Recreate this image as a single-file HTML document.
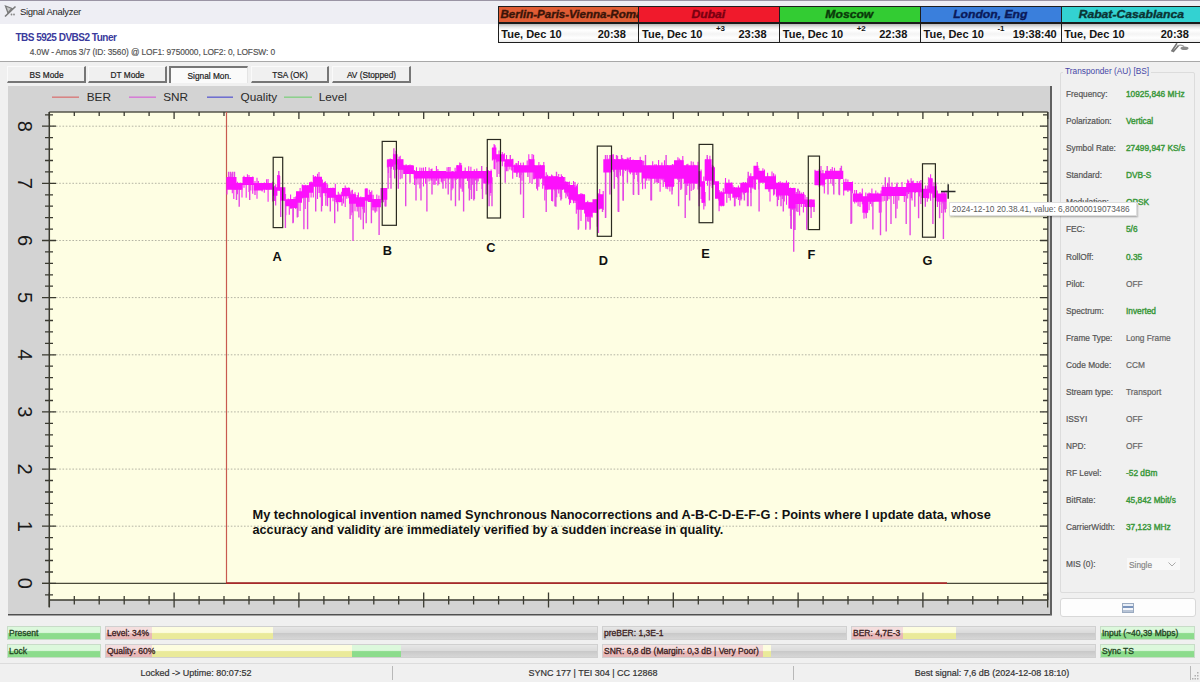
<!DOCTYPE html>
<html><head><meta charset="utf-8"><style>
*{margin:0;padding:0;box-sizing:border-box}
html,body{width:1200px;height:682px;overflow:hidden;background:#f0f0f0;font-family:"Liberation Sans", sans-serif;position:relative}
.a{position:absolute;white-space:nowrap}
.ui{font-size:8.3px;color:#333;-webkit-text-stroke:0.2px}
</style></head><body>

<div class="a" style="left:0;top:0;width:1200px;height:1px;background:#9a94a4"></div>
<div class="a" style="left:0;top:1px;width:1200px;height:23px;background:#eeeef4"></div>
<div class="a" style="left:0;top:24px;width:1200px;height:37px;background:#ffffff"></div>
<div class="a" style="left:0;top:61px;width:1200px;height:1px;background:#a8a8a8"></div>
<svg class="a" style="left:0;top:0" width="20" height="20" viewBox="0 0 20 20">
<path d="M5 16.5 L15.5 6.5" stroke="#7a7a7a" stroke-width="1.6" fill="none"/>
<path d="M5.5 6 L12 8.5 L8 13 Z" stroke="#7a7a7a" stroke-width="1.3" fill="#c8c8c8"/>
<circle cx="11.5" cy="14.5" r="0.9" fill="#888"/><circle cx="14" cy="14.5" r="0.9" fill="#888"/></svg>
<div class="a" style="left:20px;top:5.6px;font-size:9.5px;letter-spacing:-0.3px;color:#1e1e1e">Signal Analyzer</div>
<div class="a" style="left:15.4px;top:31.6px;font-size:10px;letter-spacing:-0.5px;font-weight:bold;color:#3a3a9c">TBS 5925 DVBS2 Tuner</div>
<div class="a" style="left:29.8px;top:46.6px;font-size:8.4px;letter-spacing:-0.1px;color:#505050;-webkit-text-stroke:0.15px">4.0W - Amos 3/7 (ID: 3560) @ LOF1: 9750000, LOF2: 0, LOFSW: 0</div>
<div class="a" style="left:497.7px;top:6px;width:142px;height:16.5px;background:#e05c34;border:1.5px solid #1e1e1e;border-right:none;border-bottom:none"></div>
<div class="a" style="left:497.7px;top:6px;width:141px;height:16.5px;overflow:hidden"><div style="position:absolute;left:0;top:3px;width:141px;text-align:center;font-size:10.3px;font-weight:bold;font-style:italic;color:#3a1408;-webkit-text-stroke:0.35px #3a1408;transform:scaleX(1.12);transform-origin:4px 0;text-align:left;left:3px">Berlin-Paris-Vienna-Roma</div></div>
<div class="a" style="left:497.7px;top:22px;width:142px;height:21px;background:linear-gradient(#b8b8b8 0,#e8e8e8 3px,#ffffff 6px,#f4f4f4 10px,#ffffff 14px,#ececec 18px,#e0e0e0 21px);border:1.5px solid #1e1e1e;border-top:2px solid #1a1a1a;border-right:none"></div>
<div class="a" style="left:501.3px;top:27.5px;font-size:11px;font-weight:bold;color:#141414">Tue, Dec 10</div>
<div class="a" style="left:597.7px;top:27.5px;font-size:11px;font-weight:bold;color:#141414">20:38</div>
<div class="a" style="left:638.45px;top:6px;width:142px;height:16.5px;background:#f01a2c;border:1.5px solid #1e1e1e;border-right:none;border-bottom:none"></div>
<div class="a" style="left:638.45px;top:6px;width:141px;height:16.5px;overflow:hidden"><div style="position:absolute;left:0;top:3px;width:141px;text-align:center;font-size:10.3px;font-weight:bold;font-style:italic;color:#7a0010;-webkit-text-stroke:0.35px #7a0010;transform:scaleX(1.18);transform-origin:71.5px 0;">Dubai</div></div>
<div class="a" style="left:638.45px;top:22px;width:142px;height:21px;background:linear-gradient(#b8b8b8 0,#e8e8e8 3px,#ffffff 6px,#f4f4f4 10px,#ffffff 14px,#ececec 18px,#e0e0e0 21px);border:1.5px solid #1e1e1e;border-top:2px solid #1a1a1a;border-right:none"></div>
<div class="a" style="left:642.0500000000001px;top:27.5px;font-size:11px;font-weight:bold;color:#141414">Tue, Dec 10</div>
<div class="a" style="left:715.95px;top:24px;font-size:8px;font-weight:bold;color:#141414">+3</div>
<div class="a" style="left:738.45px;top:27.5px;font-size:11px;font-weight:bold;color:#141414">23:38</div>
<div class="a" style="left:779.2px;top:6px;width:142px;height:16.5px;background:#33cc33;border:1.5px solid #1e1e1e;border-right:none;border-bottom:none"></div>
<div class="a" style="left:779.2px;top:6px;width:141px;height:16.5px;overflow:hidden"><div style="position:absolute;left:0;top:3px;width:141px;text-align:center;font-size:10.3px;font-weight:bold;font-style:italic;color:#0a3a0a;-webkit-text-stroke:0.35px #0a3a0a;transform:scaleX(1.18);transform-origin:71.5px 0;">Moscow</div></div>
<div class="a" style="left:779.2px;top:22px;width:142px;height:21px;background:linear-gradient(#b8b8b8 0,#e8e8e8 3px,#ffffff 6px,#f4f4f4 10px,#ffffff 14px,#ececec 18px,#e0e0e0 21px);border:1.5px solid #1e1e1e;border-top:2px solid #1a1a1a;border-right:none"></div>
<div class="a" style="left:782.8000000000001px;top:27.5px;font-size:11px;font-weight:bold;color:#141414">Tue, Dec 10</div>
<div class="a" style="left:856.7px;top:24px;font-size:8px;font-weight:bold;color:#141414">+2</div>
<div class="a" style="left:879.2px;top:27.5px;font-size:11px;font-weight:bold;color:#141414">22:38</div>
<div class="a" style="left:919.95px;top:6px;width:142px;height:16.5px;background:#3a7fdc;border:1.5px solid #1e1e1e;border-right:none;border-bottom:none"></div>
<div class="a" style="left:919.95px;top:6px;width:141px;height:16.5px;overflow:hidden"><div style="position:absolute;left:0;top:3px;width:141px;text-align:center;font-size:10.3px;font-weight:bold;font-style:italic;color:#0a1a5a;-webkit-text-stroke:0.35px #0a1a5a;transform:scaleX(1.18);transform-origin:71.5px 0;">London, Eng</div></div>
<div class="a" style="left:919.95px;top:22px;width:142px;height:21px;background:linear-gradient(#b8b8b8 0,#e8e8e8 3px,#ffffff 6px,#f4f4f4 10px,#ffffff 14px,#ececec 18px,#e0e0e0 21px);border:1.5px solid #1e1e1e;border-top:2px solid #1a1a1a;border-right:none"></div>
<div class="a" style="left:923.5500000000001px;top:27.5px;font-size:11px;font-weight:bold;color:#141414">Tue, Dec 10</div>
<div class="a" style="left:997.45px;top:24px;font-size:8px;font-weight:bold;color:#141414">-1</div>
<div class="a" style="left:1012.6500000000001px;top:27.5px;font-size:11px;font-weight:bold;color:#141414">19:38:40</div>
<div class="a" style="left:1060.7px;top:6px;width:142px;height:16.5px;background:#33d2d2;border:1.5px solid #1e1e1e;border-right:none;border-bottom:none"></div>
<div class="a" style="left:1060.7px;top:6px;width:141px;height:16.5px;overflow:hidden"><div style="position:absolute;left:0;top:3px;width:141px;text-align:center;font-size:10.3px;font-weight:bold;font-style:italic;color:#0a3434;-webkit-text-stroke:0.35px #0a3434;transform:scaleX(1.18);transform-origin:71.5px 0;">Rabat-Casablanca</div></div>
<div class="a" style="left:1060.7px;top:22px;width:142px;height:21px;background:linear-gradient(#b8b8b8 0,#e8e8e8 3px,#ffffff 6px,#f4f4f4 10px,#ffffff 14px,#ececec 18px,#e0e0e0 21px);border:1.5px solid #1e1e1e;border-top:2px solid #1a1a1a;border-right:none"></div>
<div class="a" style="left:1064.3px;top:27.5px;font-size:11px;font-weight:bold;color:#141414">Tue, Dec 10</div>
<div class="a" style="left:1160.7px;top:27.5px;font-size:11px;font-weight:bold;color:#141414">20:38</div>
<svg class="a" style="left:1166px;top:42px" width="30" height="14" viewBox="0 0 30 14">
<path d="M5.5 9.5 L11 1.2 M7 10 L12.5 3.5" stroke="#777" stroke-width="1.6" fill="none"/>
<path d="M12 3.5 Q16 2.5 18 4.5" stroke="#999" stroke-width="1.2" fill="none"/>
<ellipse cx="18.5" cy="6.3" rx="4" ry="1.8" fill="#8a8a8a"/></svg>
<div class="a" style="left:7px;top:66px;width:79px;height:17px;background:#f0f0f0;border-bottom:2px solid #767676;border-right:2px solid #767676;border-top:1px solid #fafafa;border-left:1px solid #fafafa"></div>
<div class="a ui" style="left:7px;top:70.3px;width:79px;text-align:center;color:#222">BS Mode</div>
<div class="a" style="left:88px;top:66px;width:79px;height:17px;background:#f0f0f0;border-bottom:2px solid #767676;border-right:2px solid #767676;border-top:1px solid #fafafa;border-left:1px solid #fafafa"></div>
<div class="a ui" style="left:88px;top:70.3px;width:79px;text-align:center;color:#222">DT Mode</div>
<div class="a" style="left:169px;top:66px;width:79px;height:17px;background:#fafafa;border-top:2px solid #767676;border-left:2px solid #767676;border-right:1px solid #e4e4e4"></div>
<div class="a ui" style="left:170px;top:71px;width:79px;text-align:center;color:#222">Signal Mon.</div>
<div class="a" style="left:251px;top:66px;width:78px;height:17px;background:#f0f0f0;border-bottom:2px solid #767676;border-right:2px solid #767676;border-top:1px solid #fafafa;border-left:1px solid #fafafa"></div>
<div class="a ui" style="left:251px;top:70.3px;width:78px;text-align:center;color:#222">TSA (OK)</div>
<div class="a" style="left:332px;top:66px;width:79px;height:17px;background:#f0f0f0;border-bottom:2px solid #767676;border-right:2px solid #767676;border-top:1px solid #fafafa;border-left:1px solid #fafafa"></div>
<div class="a ui" style="left:332px;top:70.3px;width:79px;text-align:center;color:#222">AV (Stopped)</div>
<svg class="a" style="left:0;top:0" width="1200" height="682" viewBox="0 0 1200 682">
<rect x="8" y="86" width="1044" height="529" fill="#d3d3d3"/>
<rect x="8" y="614" width="1044" height="1.5" fill="#505050"/>
<rect x="1050" y="86" width="2" height="529" fill="#606060"/>
<rect x="49.3" y="112" width="998.5" height="488" fill="#fefee3"/>
<line x1="49.3" y1="526.2" x2="1047.8" y2="526.2" stroke="#b4b4a4" stroke-width="1" stroke-dasharray="1.6 1.7"/>
<line x1="49.3" y1="469.1" x2="1047.8" y2="469.1" stroke="#b4b4a4" stroke-width="1" stroke-dasharray="1.6 1.7"/>
<line x1="49.3" y1="411.9" x2="1047.8" y2="411.9" stroke="#b4b4a4" stroke-width="1" stroke-dasharray="1.6 1.7"/>
<line x1="49.3" y1="354.8" x2="1047.8" y2="354.8" stroke="#b4b4a4" stroke-width="1" stroke-dasharray="1.6 1.7"/>
<line x1="49.3" y1="297.6" x2="1047.8" y2="297.6" stroke="#b4b4a4" stroke-width="1" stroke-dasharray="1.6 1.7"/>
<line x1="49.3" y1="240.5" x2="1047.8" y2="240.5" stroke="#b4b4a4" stroke-width="1" stroke-dasharray="1.6 1.7"/>
<line x1="49.3" y1="183.3" x2="1047.8" y2="183.3" stroke="#b4b4a4" stroke-width="1" stroke-dasharray="1.6 1.7"/>
<line x1="49.3" y1="126.2" x2="1047.8" y2="126.2" stroke="#b4b4a4" stroke-width="1" stroke-dasharray="1.6 1.7"/>
<line x1="42" y1="583.4" x2="1047.8" y2="583.4" stroke="#4a4a3a" stroke-width="1.2"/>
<line x1="49.3" y1="112" x2="1047.8" y2="112" stroke="#55554a" stroke-width="1.5"/>
<line x1="1047.8" y1="112" x2="1047.8" y2="600" stroke="#55554a" stroke-width="1.5"/>
<line x1="49.3" y1="600" x2="1047.8" y2="600" stroke="#3a3a30" stroke-width="1.5"/>
<line x1="49.3" y1="112" x2="49.3" y2="607" stroke="#3a3a30" stroke-width="1.5"/>
<path d="M45 594.8H53 M1043 594.8H1047.8 M42 583.4H56 M1040 583.4H1047.8 M45 572.0H53 M1043 572.0H1047.8 M45 560.5H53 M1043 560.5H1047.8 M45 549.1H53 M1043 549.1H1047.8 M45 537.7H53 M1043 537.7H1047.8 M42 526.2H56 M1040 526.2H1047.8 M45 514.8H53 M1043 514.8H1047.8 M45 503.4H53 M1043 503.4H1047.8 M45 492.0H53 M1043 492.0H1047.8 M45 480.5H53 M1043 480.5H1047.8 M42 469.1H56 M1040 469.1H1047.8 M45 457.7H53 M1043 457.7H1047.8 M45 446.2H53 M1043 446.2H1047.8 M45 434.8H53 M1043 434.8H1047.8 M45 423.4H53 M1043 423.4H1047.8 M42 411.9H56 M1040 411.9H1047.8 M45 400.5H53 M1043 400.5H1047.8 M45 389.1H53 M1043 389.1H1047.8 M45 377.7H53 M1043 377.7H1047.8 M45 366.2H53 M1043 366.2H1047.8 M42 354.8H56 M1040 354.8H1047.8 M45 343.4H53 M1043 343.4H1047.8 M45 331.9H53 M1043 331.9H1047.8 M45 320.5H53 M1043 320.5H1047.8 M45 309.1H53 M1043 309.1H1047.8 M42 297.6H56 M1040 297.6H1047.8 M45 286.2H53 M1043 286.2H1047.8 M45 274.8H53 M1043 274.8H1047.8 M45 263.4H53 M1043 263.4H1047.8 M45 251.9H53 M1043 251.9H1047.8 M42 240.5H56 M1040 240.5H1047.8 M45 229.1H53 M1043 229.1H1047.8 M45 217.6H53 M1043 217.6H1047.8 M45 206.2H53 M1043 206.2H1047.8 M45 194.8H53 M1043 194.8H1047.8 M42 183.3H56 M1040 183.3H1047.8 M45 171.9H53 M1043 171.9H1047.8 M45 160.5H53 M1043 160.5H1047.8 M45 149.1H53 M1043 149.1H1047.8 M45 137.6H53 M1043 137.6H1047.8 M42 126.2H56 M1040 126.2H1047.8 M45 114.8H53 M1043 114.8H1047.8 M49.3 112V119 M49.3 592.5V607.5 M74.3 112V116 M74.3 596V604.5 M99.2 112V116 M99.2 596V604.5 M124.2 112V116 M124.2 596V604.5 M149.1 112V116 M149.1 596V604.5 M174.1 112V119 M174.1 592.5V607.5 M199.1 112V116 M199.1 596V604.5 M224.0 112V116 M224.0 596V604.5 M249.0 112V116 M249.0 596V604.5 M273.9 112V116 M273.9 596V604.5 M298.9 112V119 M298.9 592.5V607.5 M323.9 112V116 M323.9 596V604.5 M348.8 112V116 M348.8 596V604.5 M373.8 112V116 M373.8 596V604.5 M398.7 112V116 M398.7 596V604.5 M423.7 112V119 M423.7 592.5V607.5 M448.7 112V116 M448.7 596V604.5 M473.6 112V116 M473.6 596V604.5 M498.6 112V116 M498.6 596V604.5 M523.5 112V116 M523.5 596V604.5 M548.5 112V119 M548.5 592.5V607.5 M573.5 112V116 M573.5 596V604.5 M598.4 112V116 M598.4 596V604.5 M623.4 112V116 M623.4 596V604.5 M648.3 112V116 M648.3 596V604.5 M673.3 112V119 M673.3 592.5V607.5 M698.3 112V116 M698.3 596V604.5 M723.2 112V116 M723.2 596V604.5 M748.2 112V116 M748.2 596V604.5 M773.1 112V116 M773.1 596V604.5 M798.1 112V119 M798.1 592.5V607.5 M823.1 112V116 M823.1 596V604.5 M848.0 112V116 M848.0 596V604.5 M873.0 112V116 M873.0 596V604.5 M897.9 112V116 M897.9 596V604.5 M922.9 112V119 M922.9 592.5V607.5 M947.9 112V116 M947.9 596V604.5 M972.8 112V116 M972.8 596V604.5 M997.8 112V116 M997.8 596V604.5 M1022.7 112V116 M1022.7 596V604.5 M1047.7 112V119 M1047.7 592.5V607.5" stroke="#3a3a30" stroke-width="1.3" fill="none"/>
<text x="0" y="0" transform="translate(25 583.4) rotate(90)" text-anchor="middle" dominant-baseline="central" font-family="Liberation Sans" font-size="20" fill="#1a1a1a">0</text>
<text x="0" y="0" transform="translate(25 526.2) rotate(90)" text-anchor="middle" dominant-baseline="central" font-family="Liberation Sans" font-size="20" fill="#1a1a1a">1</text>
<text x="0" y="0" transform="translate(25 469.1) rotate(90)" text-anchor="middle" dominant-baseline="central" font-family="Liberation Sans" font-size="20" fill="#1a1a1a">2</text>
<text x="0" y="0" transform="translate(25 411.9) rotate(90)" text-anchor="middle" dominant-baseline="central" font-family="Liberation Sans" font-size="20" fill="#1a1a1a">3</text>
<text x="0" y="0" transform="translate(25 354.8) rotate(90)" text-anchor="middle" dominant-baseline="central" font-family="Liberation Sans" font-size="20" fill="#1a1a1a">4</text>
<text x="0" y="0" transform="translate(25 297.6) rotate(90)" text-anchor="middle" dominant-baseline="central" font-family="Liberation Sans" font-size="20" fill="#1a1a1a">5</text>
<text x="0" y="0" transform="translate(25 240.5) rotate(90)" text-anchor="middle" dominant-baseline="central" font-family="Liberation Sans" font-size="20" fill="#1a1a1a">6</text>
<text x="0" y="0" transform="translate(25 183.3) rotate(90)" text-anchor="middle" dominant-baseline="central" font-family="Liberation Sans" font-size="20" fill="#1a1a1a">7</text>
<text x="0" y="0" transform="translate(25 126.2) rotate(90)" text-anchor="middle" dominant-baseline="central" font-family="Liberation Sans" font-size="20" fill="#1a1a1a">8</text>
<line x1="52" y1="97.2" x2="79" y2="97.2" stroke="#d88080" stroke-width="1.5"/>
<line x1="129" y1="97.2" x2="156" y2="97.2" stroke="#d67ad6" stroke-width="1.5"/>
<line x1="207" y1="97.2" x2="233" y2="97.2" stroke="#6a6ad0" stroke-width="1.5"/>
<line x1="284" y1="97.2" x2="312" y2="97.2" stroke="#8ad08a" stroke-width="1.5"/>
<text x="86.7" y="100.8" font-family="Liberation Sans" font-size="11.8" fill="#2a2a2a">BER</text>
<text x="163.2" y="100.8" font-family="Liberation Sans" font-size="11.8" fill="#2a2a2a">SNR</text>
<text x="240.5" y="100.8" font-family="Liberation Sans" font-size="11.8" fill="#2a2a2a">Quality</text>
<text x="318.7" y="100.8" font-family="Liberation Sans" font-size="11.8" fill="#2a2a2a">Level</text>
<line x1="226.5" y1="112" x2="226.5" y2="583.4" stroke="#c85a50" stroke-width="1.2"/>
<line x1="226" y1="583.2" x2="947" y2="583.2" stroke="#a82a2a" stroke-width="1.8"/>
<path d="M227.0 177.6V194.4 M228.1 176.9V189.0 M229.8 176.6V189.0 M230.9 173.6V189.1 M232.3 172.3V193.2 M233.8 177.7V199.0 M235.2 177.6V190.1 M237.4 181.7V194.2 M238.9 183.7V189.0 M240.2 182.6V190.1 M242.0 183.2V197.4 M244.0 175.7V187.7 M246.2 177.2V197.7 M247.4 174.3V184.5 M249.0 175.0V192.1 M250.8 177.1V190.6 M252.7 176.5V193.8 M255.0 181.1V189.6 M257.0 177.8V198.7 M258.4 181.0V189.6 M260.0 183.6V189.6 M262.1 183.3V191.4 M264.3 182.5V192.7 M266.6 179.2V189.8 M268.1 179.0V201.7 M269.3 183.4V189.6 M271.0 183.3V189.0 M272.6 181.8V201.6 M274.6 185.7V200.9 M275.7 184.3V205.4 M277.8 175.0V190.1 M279.7 176.0V190.4 M280.9 188.0V200.0 M282.1 187.2V200.0 M284.3 187.9V200.7 M285.8 199.9V215.2 M288.2 198.6V205.5 M289.3 199.6V214.7 M290.6 194.6V208.8 M291.8 200.0V208.8 M294.1 197.1V206.1 M295.7 196.4V208.9 M297.7 191.7V210.8 M300.1 188.1V211.0 M302.2 184.4V198.4 M303.2 185.5V197.7 M305.2 184.8V209.1 M307.6 185.2V197.5 M308.9 185.7V202.0 M311.1 181.6V197.5 M313.3 174.9V197.4 M315.3 176.1V186.3 M317.5 173.7V199.1 M319.0 172.1V192.9 M320.2 177.4V197.2 M322.4 179.6V205.9 M324.3 181.9V192.7 M325.3 181.2V195.9 M327.6 184.3V206.2 M328.9 188.4V197.6 M330.7 187.8V197.2 M333.0 187.6V201.3 M335.3 183.8V200.1 M337.0 195.5V203.6 M338.3 191.7V201.6 M339.9 193.6V202.5 M341.7 191.8V201.4 M343.5 188.4V203.4 M345.2 185.4V206.9 M346.8 187.4V198.7 M348.8 187.2V198.3 M351.1 190.4V215.3 M352.4 189.7V212.5 M353.6 193.8V203.0 M355.0 192.3V211.2 M357.2 194.9V211.6 M358.4 192.4V206.5 M360.8 196.6V219.7 M362.9 196.9V209.3 M364.4 197.4V212.8 M365.4 188.4V200.0 M366.9 188.0V200.0 M369.3 189.8V201.4 M370.6 191.9V202.1 M371.8 190.5V210.3 M373.2 194.8V210.6 M375.2 199.9V212.7 M376.8 194.6V211.6 M378.9 195.5V206.5 M381.1 188.0V202.7 M383.4 188.6V202.3 M384.7 188.5V198.9 M386.0 188.1V206.5 M387.4 159.8V167.4 M388.4 160.0V173.1 M390.2 158.6V178.1 M391.4 158.9V169.0 M393.5 153.5V169.8 M395.9 150.8V170.2 M397.8 159.3V168.9 M399.0 156.7V169.6 M400.2 155.8V179.2 M402.1 159.6V169.8 M403.8 164.8V174.0 M406.1 164.2V173.9 M408.5 165.2V173.3 M410.0 164.5V173.7 M411.7 165.6V173.4 M413.3 166.0V174.3 M414.6 170.1V185.1 M416.5 167.2V179.5 M418.0 171.7V184.6 M419.9 167.6V188.6 M421.8 167.8V177.9 M423.5 167.6V186.4 M425.6 167.0V183.7 M427.6 171.8V177.9 M429.1 167.6V181.6 M431.0 169.0V180.6 M432.0 168.4V180.8 M433.8 171.8V184.8 M435.1 171.4V184.7 M436.4 166.1V180.7 M437.9 169.0V185.5 M439.8 171.8V177.9 M441.2 171.2V181.7 M442.2 171.4V183.5 M444.1 171.3V181.0 M445.8 171.7V188.6 M447.1 167.2V177.7 M448.7 166.9V180.1 M450.1 167.1V178.2 M451.9 170.9V190.3 M453.1 170.9V188.5 M455.1 167.7V180.6 M456.1 171.0V180.1 M457.5 165.3V178.8 M459.7 162.6V187.2 M460.9 162.9V188.8 M462.3 170.9V191.7 M464.1 170.7V178.5 M465.2 167.6V178.6 M467.5 171.4V180.9 M468.7 166.3V188.4 M470.9 166.8V189.9 M472.7 171.8V184.8 M474.3 169.3V178.6 M475.4 171.7V180.4 M476.8 168.5V191.0 M478.2 171.3V181.6 M479.7 171.6V178.1 M482.0 171.5V189.0 M484.4 171.7V183.2 M485.5 171.8V183.4 M486.9 167.1V190.2 M488.5 170.2V184.4 M490.0 171.3V195.8 M491.1 169.4V192.9 M492.4 147.9V160.5 M494.1 144.0V169.0 M495.1 145.3V169.6 M496.7 155.0V162.6 M499.0 150.6V174.0 M500.4 154.9V164.2 M502.3 151.9V166.2 M504.4 153.2V160.8 M506.5 154.9V171.3 M507.9 159.6V171.2 M509.9 160.0V169.4 M511.7 159.7V170.6 M512.7 158.7V178.8 M514.7 164.6V172.4 M516.0 163.0V172.8 M517.0 163.3V173.9 M518.4 160.9V172.3 M519.4 164.9V177.8 M520.7 162.7V174.9 M522.0 165.4V180.8 M523.3 162.5V172.8 M525.7 165.8V172.3 M527.2 160.6V172.0 M528.8 154.3V172.0 M529.9 159.1V182.9 M532.1 154.0V183.8 M533.6 154.7V179.2 M534.6 165.1V179.3 M536.1 166.0V178.5 M537.6 165.9V190.6 M538.9 162.0V186.8 M540.5 164.7V179.3 M542.7 165.2V188.7 M543.8 162.0V185.5 M544.8 177.0V200.4 M546.2 172.2V190.0 M547.6 174.7V189.4 M549.6 176.5V188.7 M551.6 174.6V201.0 M552.7 175.6V201.4 M555.0 176.6V190.9 M556.7 176.8V197.3 M558.7 174.1V193.4 M560.2 176.9V196.9 M561.3 174.3V189.3 M562.4 175.9V189.9 M564.8 176.9V192.4 M565.9 181.3V198.2 M567.5 181.8V196.5 M569.5 181.4V204.7 M570.6 185.2V203.0 M572.2 185.5V199.6 M573.5 181.0V203.2 M575.0 182.1V203.1 M576.3 185.4V213.7 M577.4 184.0V209.6 M579.7 194.5V209.1 M581.0 193.0V220.9 M582.5 193.8V209.7 M584.6 194.9V213.5 M586.4 202.2V216.2 M587.7 200.8V221.5 M589.0 202.4V222.0 M590.3 202.8V224.5 M592.0 202.9V217.8 M593.8 200.0V212.3 M595.8 199.5V213.0 M598.1 193.1V209.5 M599.7 189.0V209.5 M601.0 194.8V208.0 M603.2 191.0V209.9 M605.5 159.8V171.8 M607.2 155.0V171.9 M609.1 158.5V172.0 M610.5 154.9V171.9 M612.2 154.4V169.3 M613.4 154.3V171.7 M614.5 159.1V180.1 M616.3 159.8V177.1 M617.6 155.7V178.2 M618.9 159.0V172.2 M620.4 159.6V175.8 M622.7 158.1V176.5 M623.7 159.9V173.4 M625.5 159.4V171.0 M627.3 157.4V171.3 M628.9 157.7V171.8 M630.3 157.1V174.3 M631.5 160.7V172.0 M633.1 159.6V175.0 M634.2 160.8V178.9 M636.3 160.8V174.9 M637.8 160.7V181.8 M640.2 156.8V172.2 M642.6 160.5V189.2 M643.8 160.8V177.7 M645.3 165.8V188.7 M646.7 165.9V180.8 M649.0 165.6V180.8 M650.4 165.8V178.3 M652.7 161.2V178.3 M654.8 164.3V183.2 M656.3 164.2V182.2 M658.6 160.1V183.1 M660.1 165.6V191.7 M661.9 162.5V180.3 M663.2 166.0V187.0 M664.5 160.2V182.3 M666.4 166.0V186.0 M667.7 164.9V189.2 M669.9 165.7V191.5 M670.9 165.2V186.1 M672.4 164.0V190.4 M673.7 164.6V186.2 M676.0 160.9V178.1 M677.9 157.3V179.9 M679.3 158.5V181.9 M680.8 159.8V190.1 M682.8 156.1V178.0 M684.6 165.7V182.8 M686.7 164.2V195.0 M687.9 163.8V185.9 M689.8 165.8V183.9 M691.2 161.3V191.0 M693.2 161.7V190.1 M694.8 164.8V183.3 M696.0 166.0V184.1 M698.0 161.7V189.4 M699.4 170.9V194.3 M701.1 169.5V198.9 M702.4 182.0V202.7 M703.8 176.6V209.4 M705.2 159.4V180.6 M707.5 157.1V185.7 M709.9 155.8V186.3 M712.1 164.8V188.1 M713.5 165.7V184.1 M715.8 182.0V198.1 M718.1 181.9V198.0 M719.1 190.6V211.3 M721.2 190.9V206.5 M723.3 188.2V205.0 M725.5 178.1V193.1 M726.8 183.5V202.7 M728.9 179.4V198.1 M730.3 183.4V200.6 M731.6 182.4V193.0 M733.0 185.3V198.1 M734.4 186.9V206.3 M736.3 187.4V198.8 M738.4 185.4V200.1 M739.7 188.4V205.5 M740.9 183.3V199.3 M743.3 182.1V194.5 M745.4 182.0V193.0 M747.6 178.2V192.5 M748.9 175.5V186.9 M750.8 173.3V193.1 M752.9 176.2V188.7 M754.4 166.6V189.5 M755.5 166.2V189.8 M757.2 161.9V179.3 M758.8 168.1V189.5 M760.7 170.9V182.2 M762.9 168.2V182.3 M764.5 169.5V182.1 M766.2 176.7V188.8 M767.6 172.7V188.6 M768.8 176.4V191.8 M770.0 176.8V201.6 M772.0 171.4V188.5 M773.6 173.2V195.5 M775.2 174.6V188.5 M776.5 183.5V196.7 M778.6 182.0V199.9 M780.2 181.3V196.7 M782.3 182.4V198.9 M784.3 183.2V201.6 M786.5 180.6V204.7 M788.5 182.3V195.9 M790.4 187.6V215.9 M792.4 188.3V209.8 M794.0 187.7V213.6 M796.3 191.9V211.4 M797.9 188.8V203.3 M799.6 190.8V215.5 M801.3 192.5V206.9 M803.4 192.0V212.6 M805.1 195.0V206.7 M807.0 196.9V206.3 M809.4 200.4V207.0 M811.0 199.3V208.3 M813.0 200.0V206.7 M815.0 169.8V184.9 M817.1 171.2V184.6 M819.2 169.1V187.0 M821.0 165.9V185.8 M822.9 170.0V186.6 M824.3 173.9V193.4 M825.8 171.1V179.7 M827.1 171.3V178.1 M829.2 171.1V179.1 M830.8 169.1V183.7 M832.3 167.1V178.1 M834.5 167.8V178.3 M836.7 171.5V178.1 M839.0 171.1V178.2 M840.2 167.9V179.5 M841.4 167.7V178.4 M843.7 179.2V195.4 M845.9 178.7V190.0 M847.9 179.6V191.9 M850.1 182.5V190.2 M851.3 182.9V192.2 M852.5 181.4V193.2 M854.7 190.1V203.6 M856.5 190.1V202.6 M858.1 194.3V206.2 M860.0 192.1V207.0 M862.3 188.5V204.2 M864.0 197.0V218.8 M865.8 192.5V213.5 M867.5 193.4V212.5 M869.1 192.5V210.2 M870.5 193.3V204.1 M871.9 188.6V206.5 M874.0 193.7V202.0 M875.8 190.6V201.0 M877.8 192.5V201.0 M879.3 194.1V212.7 M881.1 190.6V212.4 M883.0 185.3V201.6 M884.8 187.4V201.0 M886.4 187.6V195.6 M887.5 182.7V200.8 M889.0 184.0V199.2 M890.4 186.6V196.4 M892.0 182.5V195.3 M893.8 187.6V204.1 M895.6 186.5V195.3 M897.1 182.4V208.7 M898.8 187.6V200.6 M900.1 187.7V195.3 M902.0 182.1V195.4 M904.3 187.7V202.1 M905.6 187.5V195.3 M907.7 179.4V198.5 M908.8 180.8V194.0 M911.1 178.2V198.2 M912.1 181.3V200.5 M913.2 180.6V191.8 M915.4 183.8V193.0 M917.2 181.1V191.7 M919.4 181.3V196.6 M920.9 180.1V203.9 M923.0 189.1V197.2 M925.4 185.5V198.4 M927.3 185.5V201.8 M928.7 184.9V198.8 M930.6 174.2V200.7 M932.0 178.6V194.1 M933.9 182.3V197.0 M936.0 182.5V201.1 M937.4 190.4V207.1 M939.7 194.3V204.8 M941.8 190.9V213.0 M943.1 191.5V203.6 M944.4 190.9V209.4 M946.1 190.4V208.9" stroke="#f428f4" stroke-width="1.1" fill="none"/>
<path d="M239.2 186.3V206.8 M236.5 183.3V200.0 M249.7 181.0V200.0 M255.0 186.6V195.0 M280.7 194.0V217.0 M285.4 194.0V228.0 M293.3 202.7V222.6 M297.9 197.0V217.0 M292.9 202.7V223.3 M297.3 203.6V217.4 M303.9 191.5V229.2 M307.6 191.5V229.2 M315.7 181.8V211.6 M321.5 181.8V211.6 M325.9 188.1V205.7 M330.3 192.9V211.6 M334.7 192.9V223.3 M337.7 198.4V211.6 M342.0 198.4V205.7 M350.1 192.2V218.9 M353.0 199.0V240.9 M358.9 202.0V217.4 M363.3 202.0V229.2 M366.2 194.8V223.3 M371.4 198.4V223.3 M375.0 203.2V211.6 M379.1 203.2V235.0 M385.3 193.8V206.5 M385.1 193.8V206.2 M388.1 163.0V188.7 M391.0 163.0V188.7 M394.7 159.3V178.4 M398.3 164.4V188.7 M402.0 164.4V178.4 M405.7 169.7V206.2 M410.0 169.7V182.8 M416.0 174.8V200.4 M421.0 174.8V200.4 M426.9 174.8V211.4 M432.0 174.8V194.5 M438.7 174.8V184.3 M443.0 174.8V188.7 M448.2 175.1V194.5 M451.1 175.1V200.4 M455.5 175.1V206.2 M459.2 171.8V200.4 M463.6 174.8V211.4 M469.4 174.8V200.4 M473.8 174.8V200.4 M476.8 174.8V184.3 M471.5 174.8V198.9 M474.4 174.8V198.9 M482.5 174.8V198.9 M486.1 177.3V194.5 M489.1 177.3V206.2 M492.0 177.3V206.2 M497.1 157.9V177.0 M500.1 157.9V177.0 M505.2 163.0V182.8 M516.9 168.9V177.0 M520.6 168.9V194.5 M523.5 168.9V218.0 M527.9 168.9V177.0 M536.7 171.8V188.7 M546.2 182.8V212.1 M555.0 182.8V206.2 M560.9 183.2V200.4 M566.8 187.2V194.5 M561.5 183.2V198.9 M568.8 187.2V198.9 M555.9 182.8V206.7 M578.6 202.0V228.6 M585.9 209.5V228.6 M590.3 209.5V228.6 M598.4 201.5V233.0 M605.7 165.9V217.7 M618.2 164.4V211.8 M623.3 164.4V200.8 M633.6 166.3V195.0 M638.7 166.3V195.0 M578.3 202.0V229.7 M585.7 209.5V229.7 M590.0 209.5V229.7 M597.4 206.0V226.8 M602.5 201.5V212.0 M605.5 165.9V218.0 M609.9 165.9V194.5 M614.3 164.4V188.7 M618.7 164.4V212.0 M623.0 164.4V200.4 M627.4 164.4V182.8 M633.3 166.3V194.5 M638.4 166.3V194.5 M642.1 171.8V182.8 M650.9 172.0V200.4 M657.5 172.0V182.8 M651.5 172.0V200.4 M657.3 172.0V182.8 M666.1 176.0V188.7 M672.0 176.0V194.5 M678.6 169.5V206.2 M681.5 169.5V188.7 M685.2 174.4V218.0 M689.6 174.4V200.4 M694.0 174.4V188.7 M699.1 179.0V206.2 M705.0 192.0V206.2 M709.4 170.0V200.4 M718.9 190.0V200.4 M723.3 199.0V206.2 M729.2 188.2V194.5 M735.0 192.4V206.2 M740.9 187.6V200.4 M747.5 187.6V206.2 M741.5 187.6V198.9 M744.4 187.6V200.4 M748.1 187.6V206.2 M751.0 181.9V206.2 M759.1 176.8V211.4 M774.5 182.7V194.5 M777.4 189.2V206.2 M781.0 189.2V206.2 M783.3 189.2V211.4 M791.3 198.2V229.0 M795.0 198.2V230.0 M797.9 198.9V212.1 M806.7 203.3V229.7 M811.1 203.3V218.0 M814.0 203.3V212.1 M828.0 174.8V194.5 M833.8 174.8V194.5 M839.0 174.8V194.5 M793.7 198.2V251.8 M790.8 198.2V228.4 M806.9 203.3V228.4 M851.6 186.2V223.3 M832.9 174.8V185.7 M839.5 174.8V195.3 M851.0 186.2V223.9 M866.2 204.5V218.2 M872.9 197.7V229.6 M880.5 197.7V235.3 M886.2 191.5V231.5 M891.0 191.5V223.9 M895.8 191.5V218.2 M906.2 191.5V223.9 M910.1 187.7V235.3 M914.8 187.7V206.7 M918.6 187.7V218.2 M925.3 193.4V206.7 M932.9 192.0V223.9 M939.6 197.7V218.2 M943.4 197.7V239.1 M945.3 197.7V212.4 M228.6 183.3V171.8 M230.5 183.3V171.8 M232.6 183.3V171.8 M234.5 183.3V171.8 M278.8 183.0V171.0 M393.9 159.3V148.3 M481.7 174.8V165.9 M510.3 163.0V155.0 M556.5 182.8V171.8 M605.5 165.9V155.0 M609.9 165.9V155.0 M616.5 164.4V155.0 M621.6 164.4V155.0 M645.5 171.8V155.0 M666.1 176.0V155.0 M707.2 170.0V155.0 M748.2 187.6V171.8 M754.7 172.6V166.0 M797.9 198.9V188.7 M827.2 174.8V166.0 M885.3 191.5V177.2 M889.1 191.5V177.2 M896.7 191.5V183.8 M841.4 174.8V165.7 M928.6 193.4V177.2" stroke="#e448e4" stroke-width="1.4" fill="none"/>
<path d="M226.6 176.9H236.5V189.8H226.6Z M236.5 182.9H242.5V189.8H236.5Z M242.5 176.9H253.7V185.1H242.5Z M253.7 182.9H262.9V190.4H253.7Z M262.9 182.9H272.8V189.8H262.9Z M272.8 187.2H277.4V195.8H272.8Z M277.4 175.2H280.0V190.8H277.4Z M280.0 187.2H285.4V200.8H280.0Z M285.4 199.2H296.0V206.2H285.4Z M290.0 199.1H297.3V208.0H290.0Z M296.0 191.2H302.0V202.8H296.0Z M302.0 185.2H309.0V197.8H302.0Z M309.0 182.2H313.0V192.8H309.0Z M313.0 176.7H322.0V186.8H313.0Z M321.5 182.9H326.7V193.3H321.5Z M326.7 188.1H335.5V197.8H326.7Z M335.5 194.7H342.0V202.1H335.5Z M342.0 188.1H350.1V196.3H342.0Z M349.0 194.2H356.0V203.8H349.0Z M356.0 197.2H365.0V206.8H356.0Z M364.8 188.8H367.7V200.8H364.8Z M367.7 194.7H372.1V202.1H367.7Z M372.1 199.1H380.9V207.3H372.1Z M380.9 187.9H387.3V199.7H380.9Z M387.3 159.2H393.2V166.8H387.3Z M393.2 154.2H397.6V164.5H393.2Z M397.6 159.2H403.5V169.7H397.6Z M403.5 165.2H413.7V174.1H403.5Z M413.7 171.0H446.0V178.5H413.7Z M446.0 171.7H456.2V178.5H446.0Z M456.2 165.2H462.1V178.5H456.2Z M462.0 171.0H483.2V178.5H462.0Z M483.2 171.0H492.0V183.6H483.2Z M492.0 147.5H496.4V159.4H492.0Z M496.4 154.2H504.5V161.6H496.4Z M504.5 159.2H513.3V166.8H504.5Z M513.3 165.2H528.7V172.6H513.3Z M528.7 159.2H534.5V172.6H528.7Z M534.5 165.2H544.8V178.5H534.5Z M544.8 176.2H558.0V189.5H544.8Z M558.0 176.9H564.4V189.5H558.0Z M564.4 182.0H568.8V192.4H564.4Z M568.8 184.9H574.7V199.8H568.8Z M572.5 187.2H577.5V200.8H572.5Z M577.5 194.2H585.0V209.8H577.5Z M585.0 202.2H592.5V216.8H585.0Z M592.5 199.2H597.5V212.8H592.5Z M597.5 194.2H603.3V208.8H597.5Z M603.3 159.2H612.0V172.6H603.3Z M612.0 159.2H629.0V169.7H612.0Z M629.0 160.0H642.0V172.6H629.0Z M642.0 165.2H650.0V178.5H642.0Z M650.0 165.2H665.0V178.8H650.0Z M665.0 165.2H674.0V186.8H665.0Z M674.0 160.2H683.7V178.8H674.0Z M683.7 165.2H698.4V183.6H683.7Z M698.4 171.2H701.5V186.8H698.4Z M701.5 181.2H705.0V202.8H701.5Z M705.0 159.2H711.6V180.8H705.0Z M711.6 167.2H715.0V184.8H711.6Z M715.0 181.2H719.0V198.8H715.0Z M719.0 192.2H724.5V205.8H719.0Z M724.5 182.7H732.6V193.8H724.5Z M732.6 187.6H740.6V197.3H732.6Z M740.6 182.7H748.7V192.4H740.6Z M748.7 176.2H753.5V187.6H748.7Z M753.5 165.8H758.4V179.5H753.5Z M758.4 170.7H764.8V182.8H758.4Z M764.8 176.2H776.0V189.2H764.8Z M776.0 182.7H789.0V195.6H776.0Z M788.4 187.9H795.7V208.5H788.4Z M795.7 193.7H804.5V204.1H795.7Z M804.5 199.6H814.8V207.0H804.5Z M814.8 170.7H821.0V185.2H814.8Z M821.0 173.2H825.0V184.8H821.0Z M825.0 170.7H843.3V178.9H825.0Z M843.3 182.1H852.9V190.4H843.3Z M852.9 193.5H862.4V201.8H852.9Z M862.4 196.2H868.1V212.8H862.4Z M868.1 193.5H881.5V201.8H868.1Z M881.5 186.9H906.2V196.1H881.5Z M906.2 183.0H921.5V192.3H906.2Z M921.5 188.8H929.1V198.0H921.5Z M929.1 178.2H932.5V192.8H929.1Z M932.5 186.2H936.7V197.8H932.5Z M936.7 193.5H946.3V201.8H936.7Z" fill="#fc10fc"/>
<rect x="273.2" y="157.3" width="9.5" height="70.3" fill="none" stroke="#2a2a20" stroke-width="1.2"/>
<text x="277.2" y="260.6" text-anchor="middle" font-family="Liberation Sans" font-weight="bold" font-size="12.8" fill="#111">A</text>
<rect x="382.2" y="141.4" width="14.2" height="83.9" fill="none" stroke="#2a2a20" stroke-width="1.2"/>
<text x="387.3" y="255.2" text-anchor="middle" font-family="Liberation Sans" font-weight="bold" font-size="12.8" fill="#111">B</text>
<rect x="487.3" y="139.5" width="13.2" height="78.5" fill="none" stroke="#2a2a20" stroke-width="1.2"/>
<text x="490.8" y="251.9" text-anchor="middle" font-family="Liberation Sans" font-weight="bold" font-size="12.8" fill="#111">C</text>
<rect x="597.3" y="146.1" width="14.2" height="90.2" fill="none" stroke="#2a2a20" stroke-width="1.2"/>
<text x="603.3" y="265.4" text-anchor="middle" font-family="Liberation Sans" font-weight="bold" font-size="12.8" fill="#111">D</text>
<rect x="699.1" y="144.4" width="13.7" height="78.3" fill="none" stroke="#2a2a20" stroke-width="1.2"/>
<text x="705.5" y="257.6" text-anchor="middle" font-family="Liberation Sans" font-weight="bold" font-size="12.8" fill="#111">E</text>
<rect x="808.3" y="156.1" width="11.2" height="73.5" fill="none" stroke="#2a2a20" stroke-width="1.2"/>
<text x="811.5" y="259.4" text-anchor="middle" font-family="Liberation Sans" font-weight="bold" font-size="12.8" fill="#111">F</text>
<rect x="922.5" y="163.8" width="12.9" height="73.4" fill="none" stroke="#2a2a20" stroke-width="1.2"/>
<text x="927.5" y="264.6" text-anchor="middle" font-family="Liberation Sans" font-weight="bold" font-size="12.8" fill="#111">G</text>
<text x="252.5" y="519" font-family="Liberation Sans" font-weight="bold" font-size="12.8" fill="#111">My technological invention named Synchronous Nanocorrections and A-B-C-D-E-F-G : Points where I update data, whose</text>
<text x="252.5" y="533.8" font-family="Liberation Sans" font-weight="bold" font-size="12.7" fill="#111">accuracy and validity are immediately verified by a sudden increase in quality.</text>
<path d="M941 191.5H955.5 M948.2 184.2V198.7" stroke="#2a2a2a" stroke-width="1.5"/>
</svg>
<div class="a" style="left:1060px;top:72px;width:135px;height:521px;border:1px solid #dcdcdc;border-radius:2px"></div>
<div class="a" style="left:1063px;top:66px;padding:0 2px;background:#f0f0f0;font-size:8.3px;color:#4646a6">Transponder (AU) [BS]</div>
<div class="a ui" style="left:1066px;top:89.0px;color:#555">Frequency:</div>
<div class="a ui" style="left:1126px;top:89.0px;color:#3a983a;-webkit-text-stroke:0.4px #3a983a">10925,846 MHz</div>
<div class="a ui" style="left:1066px;top:116.1px;color:#555">Polarization:</div>
<div class="a ui" style="left:1126px;top:116.1px;color:#3a983a;-webkit-text-stroke:0.4px #3a983a">Vertical</div>
<div class="a ui" style="left:1066px;top:143.2px;color:#555">Symbol Rate:</div>
<div class="a ui" style="left:1126px;top:143.2px;color:#3a983a;-webkit-text-stroke:0.4px #3a983a">27499,947 KS/s</div>
<div class="a ui" style="left:1066px;top:170.2px;color:#555">Standard:</div>
<div class="a ui" style="left:1126px;top:170.2px;color:#3a983a;-webkit-text-stroke:0.4px #3a983a">DVB-S</div>
<div class="a ui" style="left:1066px;top:197.3px;color:#555">Modulation:</div>
<div class="a ui" style="left:1126px;top:197.3px;color:#3a983a;-webkit-text-stroke:0.4px #3a983a">QPSK</div>
<div class="a ui" style="left:1066px;top:224.4px;color:#555">FEC:</div>
<div class="a ui" style="left:1126px;top:224.4px;color:#3a983a;-webkit-text-stroke:0.4px #3a983a">5/6</div>
<div class="a ui" style="left:1066px;top:251.5px;color:#555">RollOff:</div>
<div class="a ui" style="left:1126px;top:251.5px;color:#3a983a;-webkit-text-stroke:0.4px #3a983a">0.35</div>
<div class="a ui" style="left:1066px;top:278.6px;color:#555">Pilot:</div>
<div class="a ui" style="left:1126px;top:278.6px;color:#666">OFF</div>
<div class="a ui" style="left:1066px;top:305.6px;color:#555">Spectrum:</div>
<div class="a ui" style="left:1126px;top:305.6px;color:#3a983a;-webkit-text-stroke:0.4px #3a983a">Inverted</div>
<div class="a ui" style="left:1066px;top:332.7px;color:#555">Frame Type:</div>
<div class="a ui" style="left:1126px;top:332.7px;color:#666">Long Frame</div>
<div class="a ui" style="left:1066px;top:359.8px;color:#555">Code Mode:</div>
<div class="a ui" style="left:1126px;top:359.8px;color:#666">CCM</div>
<div class="a ui" style="left:1066px;top:386.9px;color:#555">Stream type:</div>
<div class="a ui" style="left:1126px;top:386.9px;color:#666">Transport</div>
<div class="a ui" style="left:1066px;top:414.0px;color:#555">ISSYI</div>
<div class="a ui" style="left:1126px;top:414.0px;color:#666">OFF</div>
<div class="a ui" style="left:1066px;top:441.0px;color:#555">NPD:</div>
<div class="a ui" style="left:1126px;top:441.0px;color:#666">OFF</div>
<div class="a ui" style="left:1066px;top:468.1px;color:#555">RF Level:</div>
<div class="a ui" style="left:1126px;top:468.1px;color:#3a983a;-webkit-text-stroke:0.4px #3a983a">-52 dBm</div>
<div class="a ui" style="left:1066px;top:495.2px;color:#555">BitRate:</div>
<div class="a ui" style="left:1126px;top:495.2px;color:#3a983a;-webkit-text-stroke:0.4px #3a983a">45,842 Mbit/s</div>
<div class="a ui" style="left:1066px;top:522.3px;color:#555">CarrierWidth:</div>
<div class="a ui" style="left:1126px;top:522.3px;color:#3a983a;-webkit-text-stroke:0.4px #3a983a">37,123 MHz</div>
<div class="a ui" style="left:1066px;top:559px;color:#555">MIS (0):</div>
<div class="a" style="left:1126px;top:557px;width:55px;height:14px;background:#f8f8f8;border:1px solid #f0f0f0"></div>
<div class="a ui" style="left:1129px;top:559.5px;color:#888">Single</div>
<svg class="a" style="left:1168px;top:562px" width="8" height="5"><path d="M0.5 0.5L4 4L7.5 0.5" stroke="#aaa" fill="none"/></svg>
<div class="a" style="left:1060px;top:598px;width:136px;height:19px;background:#fdfdfd;border:1px solid #d8d8d8;border-radius:3px"></div>
<div class="a" style="left:1122px;top:603px;width:11.5px;height:10px;border:1px solid #9aaac0;background:linear-gradient(#e8eef6 0 2px,#7a94bc 2px 4px,#f4f6fa 4px 6px,#b8c4d6 6px)"></div>
<div class="a" style="left:7px;top:626px;width:94px;height:14px;background:linear-gradient(#e6e6e6,#dadada 50%,#c8c8c8 50%,#d6d6d6);border:1px solid #c8dcc8"></div>
<div class="a" style="left:8px;top:627px;width:92px;height:12px;background:linear-gradient(#dcf8dc 0%,#dcf8dc 45%,#8cdc8c 55%,#8cdc8c 100%)"></div>
<div class="a ui" style="left:9px;top:628.1px;font-size:8.5px;color:#224422;-webkit-text-stroke:0.3px #224422">Present</div>
<div class="a" style="left:7px;top:644px;width:94px;height:14px;background:linear-gradient(#e6e6e6,#dadada 50%,#c8c8c8 50%,#d6d6d6);border:1px solid #c8dcc8"></div>
<div class="a" style="left:8px;top:645px;width:92px;height:12px;background:linear-gradient(#dcf8dc 0%,#dcf8dc 45%,#8cdc8c 55%,#8cdc8c 100%)"></div>
<div class="a ui" style="left:9px;top:646.1px;font-size:8.5px;color:#224422;-webkit-text-stroke:0.3px #224422">Lock</div>
<div class="a" style="left:105px;top:626px;width:493px;height:14px;background:linear-gradient(#e6e6e6,#dadada 50%,#c8c8c8 50%,#d6d6d6);border:1px solid #d0d0d0"></div>
<div class="a" style="left:106px;top:627px;width:46px;height:12px;background:linear-gradient(#f4dede 0%,#f4dede 45%,#e8b8b8 55%,#e8b8b8 100%)"></div>
<div class="a" style="left:152px;top:627px;width:121px;height:12px;background:linear-gradient(#fdfde0 0%,#fdfde0 45%,#eaea9a 55%,#eaea9a 100%)"></div>
<div class="a ui" style="left:107px;top:628.1px;font-size:8.5px;color:#3a2020;-webkit-text-stroke:0.3px #3a2020">Level: 34%</div>
<div class="a" style="left:105px;top:644px;width:493px;height:14px;background:linear-gradient(#e6e6e6,#dadada 50%,#c8c8c8 50%,#d6d6d6);border:1px solid #d0d0d0"></div>
<div class="a" style="left:106px;top:645px;width:46px;height:12px;background:linear-gradient(#f4dede 0%,#f4dede 45%,#e8b8b8 55%,#e8b8b8 100%)"></div>
<div class="a" style="left:152px;top:645px;width:200px;height:12px;background:linear-gradient(#fdfde0 0%,#fdfde0 45%,#eaea9a 55%,#eaea9a 100%)"></div>
<div class="a" style="left:352px;top:645px;width:49px;height:12px;background:linear-gradient(#dcf8dc 0%,#dcf8dc 45%,#8cdc8c 55%,#8cdc8c 100%)"></div>
<div class="a ui" style="left:107px;top:646.1px;font-size:8.5px;color:#3a2020;-webkit-text-stroke:0.3px #3a2020">Quality: 60%</div>
<div class="a" style="left:602px;top:626px;width:245px;height:14px;background:linear-gradient(#e6e6e6,#dadada 50%,#c8c8c8 50%,#d6d6d6);border:1px solid #d0d0d0"></div>
<div class="a ui" style="left:604px;top:628.1px;font-size:8.5px;color:#3a2020;-webkit-text-stroke:0.3px #3a2020">preBER: 1,3E-1</div>
<div class="a" style="left:602px;top:644px;width:494px;height:14px;background:linear-gradient(#e6e6e6,#dadada 50%,#c8c8c8 50%,#d6d6d6);border:1px solid #d0d0d0"></div>
<div class="a" style="left:603px;top:645px;width:160px;height:12px;background:linear-gradient(#f4dede 0%,#f4dede 45%,#e8b8b8 55%,#e8b8b8 100%)"></div>
<div class="a" style="left:763px;top:645px;width:8px;height:12px;background:linear-gradient(#fdfde0 0%,#fdfde0 45%,#eaea9a 55%,#eaea9a 100%)"></div>
<div class="a ui" style="left:604px;top:646.1px;font-size:8.5px;color:#3a2020;-webkit-text-stroke:0.3px #3a2020">SNR: 6,8 dB (Margin: 0,3 dB | Very Poor)</div>
<div class="a" style="left:851px;top:626px;width:245px;height:14px;background:linear-gradient(#e6e6e6,#dadada 50%,#c8c8c8 50%,#d6d6d6);border:1px solid #d0d0d0"></div>
<div class="a" style="left:852px;top:627px;width:51px;height:12px;background:linear-gradient(#f4dede 0%,#f4dede 45%,#e8b8b8 55%,#e8b8b8 100%)"></div>
<div class="a" style="left:903px;top:627px;width:53px;height:12px;background:linear-gradient(#fdfde0 0%,#fdfde0 45%,#eaea9a 55%,#eaea9a 100%)"></div>
<div class="a ui" style="left:853px;top:628.1px;font-size:8.5px;color:#3a2020;-webkit-text-stroke:0.3px #3a2020">BER: 4,7E-3</div>
<div class="a" style="left:1100px;top:626px;width:95px;height:14px;background:linear-gradient(#e6e6e6,#dadada 50%,#c8c8c8 50%,#d6d6d6);border:1px solid #c8dcc8"></div>
<div class="a" style="left:1101px;top:627px;width:93px;height:12px;background:linear-gradient(#dcf8dc 0%,#dcf8dc 45%,#8cdc8c 55%,#8cdc8c 100%)"></div>
<div class="a ui" style="left:1102px;top:628.1px;font-size:8.5px;color:#224422;-webkit-text-stroke:0.3px #224422">Input (~40,39 Mbps)</div>
<div class="a" style="left:1100px;top:644px;width:95px;height:14px;background:linear-gradient(#e6e6e6,#dadada 50%,#c8c8c8 50%,#d6d6d6);border:1px solid #c8dcc8"></div>
<div class="a" style="left:1101px;top:645px;width:93px;height:12px;background:linear-gradient(#dcf8dc 0%,#dcf8dc 45%,#8cdc8c 55%,#8cdc8c 100%)"></div>
<div class="a ui" style="left:1102px;top:646.1px;font-size:8.5px;color:#224422;-webkit-text-stroke:0.3px #224422">Sync TS</div>
<div class="a" style="left:0;top:663px;width:1200px;height:1px;background:#dcdcdc"></div>
<div class="a" style="left:0;top:664px;width:1200px;height:18px;background:#f0f0f0"></div>
<div class="a" style="left:392px;top:666px;width:1px;height:14px;background:#b8b8b8"></div>
<div class="a" style="left:793px;top:666px;width:1px;height:14px;background:#b8b8b8"></div>
<div class="a" style="left:1190px;top:666px;width:1px;height:14px;background:#b8b8b8"></div>
<div class="a ui" style="left:0;top:667.5px;width:392px;text-align:center;color:#333;font-size:9px">Locked -&gt; Uptime: 80:07:52</div>
<div class="a ui" style="left:393px;top:667.5px;width:400px;text-align:center;color:#333;font-size:9px">SYNC 177 | TEI 304 | CC 12868</div>
<div class="a ui" style="left:794px;top:667.5px;width:396px;text-align:center;color:#333;font-size:9px">Best signal: 7,6 dB (2024-12-08 18:10)</div>
<div class="a" style="left:949px;top:201.7px;width:188px;height:14px;background:#fff;border:1px solid #dedede;box-shadow:1px 1.5px 1.5px rgba(0,0,0,0.25)"></div>
<div class="a" style="left:952px;top:203.5px;font-size:8.3px;color:#5a5a5a">2024-12-10 20.38.41, value: 6,80000019073486</div>
<svg class="a" style="left:1190px;top:670px" width="10" height="12"><g fill="#b0b0b0"><rect x="7" y="2" width="1.5" height="1.5"/><rect x="4.5" y="5" width="1.5" height="1.5"/><rect x="7" y="5" width="1.5" height="1.5"/><rect x="2" y="8" width="1.5" height="1.5"/><rect x="4.5" y="8" width="1.5" height="1.5"/><rect x="7" y="8" width="1.5" height="1.5"/></g></svg>
</body></html>
